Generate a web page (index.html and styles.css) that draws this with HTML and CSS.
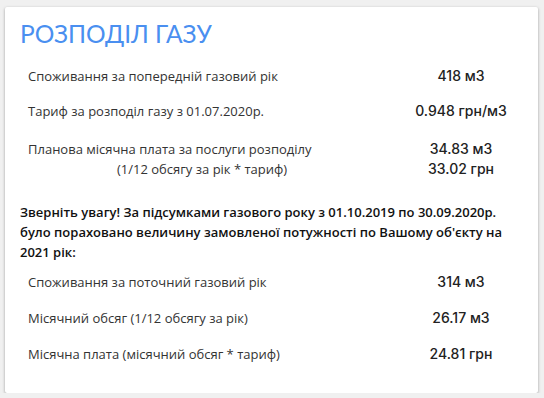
FILE: index.html
```html
<!DOCTYPE html>
<html lang="uk">
<head>
<meta charset="utf-8">
<link rel="stylesheet" href="styles.css">
</head>
<body>
<div class="card">
  <h1 class="title">РОЗПОДІЛ ГАЗУ</h1>
  <div class="row r1">
    <div class="label">Споживання за попередній газовий рік</div>
    <div class="value">418 м3</div>
  </div>
  <div class="row r2">
    <div class="label">Тариф за розподіл газу з 01.07.2020р.</div>
    <div class="value">0.948 грн/м3</div>
  </div>
  <div class="row r3">
    <div class="label">Планова місячна плата за послуги розподілу<br><span class="sub">(1/12 обсягу за рік * тариф)</span></div>
    <div class="value">34.83 м3<br>33.02 грн</div>
  </div>
  <p class="note">Зверніть увагу! За підсумками газового року з 01.10.2019 по 30.09.2020р. було пораховано величину замовленої потужності по Вашому об'єкту на 2021 рік:</p>
  <div class="row r4">
    <div class="label">Споживання за поточний газовий рік</div>
    <div class="value">314 м3</div>
  </div>
  <div class="row r5">
    <div class="label">Місячний обсяг (1/12 обсягу за рік)</div>
    <div class="value">26.17 м3</div>
  </div>
  <div class="row r6">
    <div class="label">Місячна плата (місячний обсяг * тариф)</div>
    <div class="value">24.81 грн</div>
  </div>
</div>
</body>
</html>
```
FILE: styles.css
```css
html, body {
  margin: 0;
  padding: 0;
}
body {
  background: #f0f0f0;
  font-family: "Open Sans", "Noto Sans", sans-serif;
  color: #333;
}
.card {
  margin: 7px 6px 0 5px;
  background: #fff;
  box-shadow: 0 1px 3px rgba(0,0,0,0.35);
  border-radius: 2px;
  padding: 12px 0 30px 15px;
  height: 386px;
  box-sizing: border-box;
}
.title {
  margin: 0;
  font-family: "Lato", sans-serif;
  font-weight: 400;
  font-size: 24.5px;
  line-height: 30px;
  color: #4a8ff0;
}
.row {
  display: grid;
  grid-template-columns: 1fr 154px;
  line-height: 20px;
  font-size: 13px;
}
.label {
  padding-left: 8px;
  color: #333;
}
.sub {
  padding-left: 89px;
}
.value {
  text-align: center;
  font-family: "Inter", sans-serif;
  font-size: 14px;
  font-weight: 500;
  color: #222;
}
.r1 { margin-top: 17px; }
.r2 { margin-top: 15px; }
.r3 { margin-top: 18px; }
.note {
  margin: 23px 0 0 0;
  font-weight: 600;
  font-size: 13px;
  line-height: 20px;
  color: #111;
  padding-right: 10px;
}
.r4 { margin-top: 10px; }
.r5 { margin-top: 16px; }
.r6 { margin-top: 16px; }
```
